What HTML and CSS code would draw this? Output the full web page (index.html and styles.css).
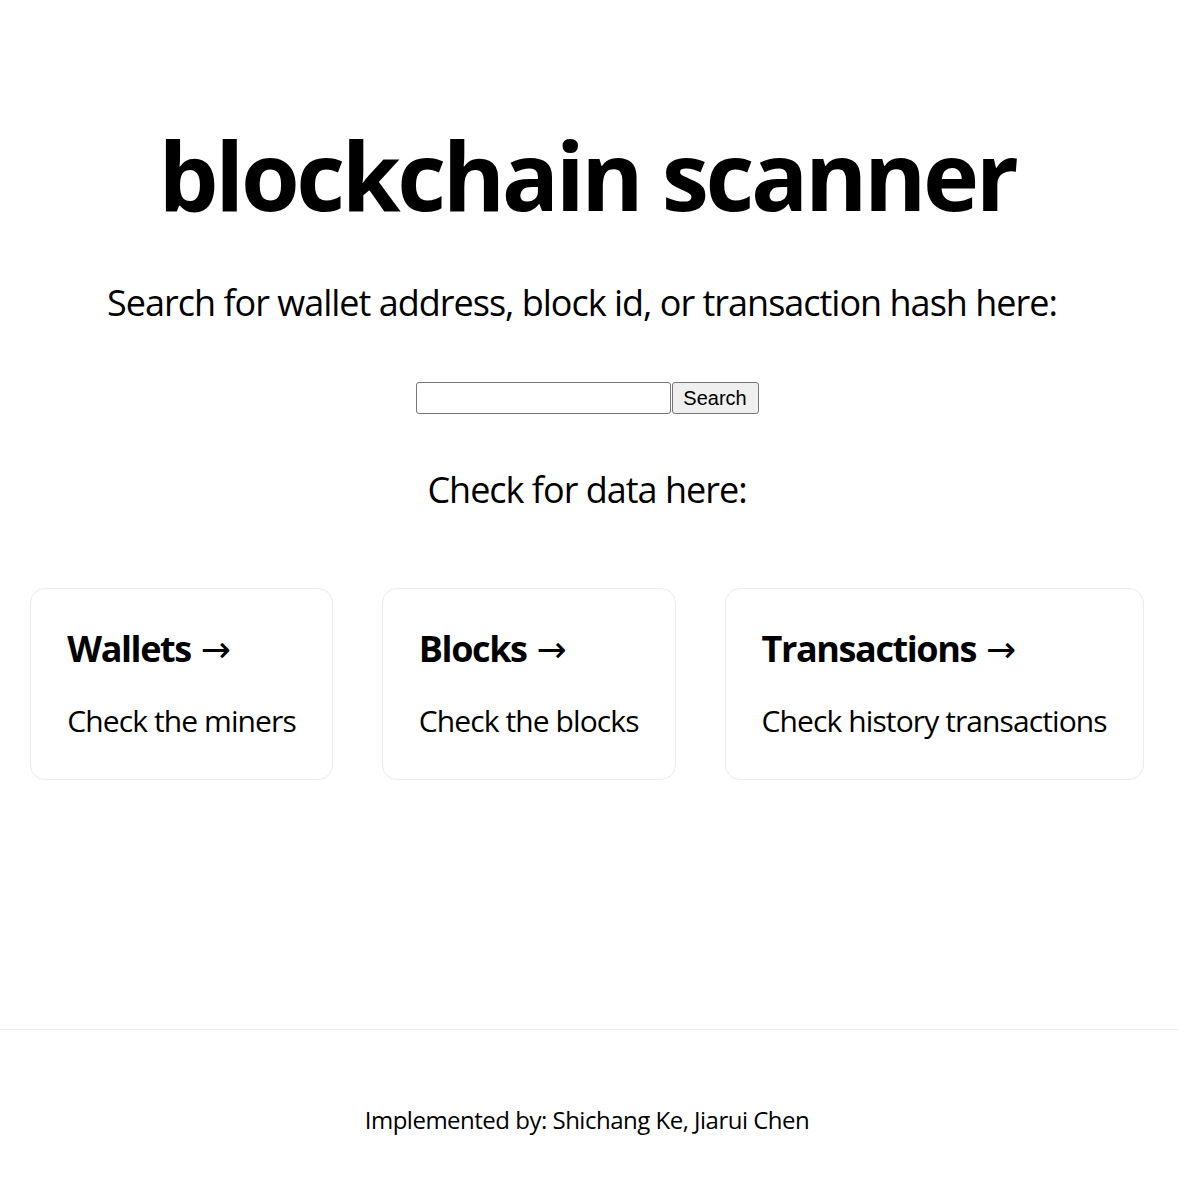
FILE: index.html
```html
<!DOCTYPE html>
<html lang="en">
<head>
<meta charset="utf-8">
<title>blockchain scanner</title>
<link rel="stylesheet" href="styles.css">
</head>
<body>
<div class="page">
  <main class="main">
    <h1 class="title">blockchain scanner</h1>
    <p class="description lead">Search for wallet address, block id, or transaction hash here:</p>
    <form class="search"><input class="search-input" type="text"><button class="search-btn" type="button">Search</button></form>
    <p class="description data">Check for data here:</p>
    <div class="grid">
      <a class="card" href="#"><h2>Wallets <span class="arrow">&rarr;</span></h2><p>Check the miners</p></a>
      <a class="card" href="#"><h2>Blocks <span class="arrow">&rarr;</span></h2><p>Check the blocks</p></a>
      <a class="card" href="#"><h2>Transactions <span class="arrow">&rarr;</span></h2><p>Check history transactions</p></a>
    </div>
  </main>
  <footer class="footer">Implemented by: Shichang Ke, Jiarui Chen</footer>
</div>
</body>
</html>
```

FILE: styles.css
```css
html, body {
  margin: 0;
  padding: 0;
  background: #fff;
  color: #000;
  font-family: "Open Sans", "Noto Sans", sans-serif;
}
.page {
  width: 1178px;
  min-height: 1185px;
  display: flex;
  flex-direction: column;
}
.main {
  display: flex;
  flex-direction: column;
  align-items: center;
  padding-top: 119px;
  padding-right: 4px;
}
.title {
  margin: 0;
  font-size: 95px;
  line-height: 110px;
  font-weight: 700;
  letter-spacing: -3.4px;
}
.description {
  margin: 47px 0 0;
  font-size: 36px;
  line-height: 54px;
  letter-spacing: -1px;
}
.lead {
  padding-right: 10px;
}
.search {
  margin-top: 52px;
  display: flex;
}
.search-input {
  box-sizing: border-box;
  width: 255px;
  height: 32px;
  margin: 0;
  border: 1px solid #767676;
  border-radius: 3px;
  padding: 2px 4px;
  font: 20px "Liberation Sans", Arial, sans-serif;
}
.search-btn {
  box-sizing: border-box;
  width: 87px;
  height: 32px;
  margin: 0 0 0 1px;
  border: 1px solid #767676;
  border-radius: 3px;
  background: #efefef;
  color: #000;
  padding: 0 8px;
  font: 20px "Liberation Sans", Arial, sans-serif;
}
.data {
  margin-top: 49px;
}
.grid {
  margin-top: 71px;
  display: flex;
  justify-content: center;
  gap: 49px;
}
.card {
  display: block;
  padding: 36px;
  border: 1px solid #eaeaea;
  border-radius: 15px;
  color: inherit;
  text-decoration: none;
  text-align: left;
}
.card h2 {
  margin: 0 0 24px;
  font-size: 36px;
  line-height: 48px;
  font-weight: 700;
  letter-spacing: -1.4px;
}
.arrow {
  margin-left: 2px;
  font-family: "DejaVu Sans", sans-serif;
  font-weight: 400;
  letter-spacing: 0;
  font-size: 36px;
}
.card p {
  margin: 0;
  font-size: 30px;
  line-height: 45px;
  letter-spacing: -0.9px;
}
.footer {
  margin-top: auto;
  height: 156px;
  box-sizing: border-box;
  border-top: 1px solid #eaeaea;
  padding-top: 73px;
  padding-right: 4px;
  text-align: center;
  font-size: 24px;
  line-height: 33px;
  letter-spacing: -0.5px;
}
```
